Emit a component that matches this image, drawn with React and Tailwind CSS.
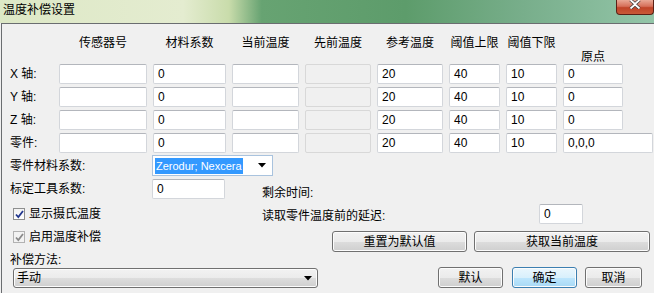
import React from "react";

const headers = ["传感器号", "材料系数", "当前温度", "先前温度", "参考温度", "阈值上限", "阈值下限"];

const rows = [
  { label: "X 轴:", origin: "0" },
  { label: "Y 轴:", origin: "0" },
  { label: "Z 轴:", origin: "0" },
  { label: "零件:", origin: "0,0,0", wide: true },
];

const Box = ({ value, disabled, className = "" }) => (
  <div
    className={`h-[20px] border rounded-[2px] pl-[4px] flex items-center leading-none ${
      disabled ? "bg-[#f0f0f0] border-[#d8d8d8]" : "bg-white border-[#d3d6db] border-t-[#b3b6bc]"
    } ${className}`}
  >
    {value}
  </div>
);

const Arrow = () => (
  <svg width="8" height="5" viewBox="0 0 8 5" className="shrink-0">
    <path d="M0 0H8L4 4.5Z" fill="#000" />
  </svg>
);

const Check = ({ disabled }) => (
  <div
    className={`w-[12px] h-[12px] border flex items-center justify-center ${
      disabled ? "border-[#b2b2b2] bg-[#f2f2f2]" : "border-[#8e8f8f] bg-[linear-gradient(to_bottom,#f2f2f2,#ffffff)]"
    }`}
  >
    <svg width="9" height="9" viewBox="0 0 9 9">
      <path d="M1 4.5L3.3 7L8 1" fill="none" stroke={disabled ? "#8a8a8a" : "#22378e"} strokeWidth="1.8" />
    </svg>
  </div>
);

const Button = ({ children, primary, className = "" }) => (
  <div
    className={`h-[21px] border rounded-[3px] flex items-center justify-center leading-none shadow-[inset_0_0_0_1px_#fcfcfc] ${
      primary
        ? "border-[#3c7fb1] bg-[linear-gradient(to_bottom,#eaf6fd_0%,#d9f0fc_50%,#bee6fd_51%,#a7d9f5_100%)]"
        : "border-[#707070] bg-[linear-gradient(to_bottom,#f2f2f2_0%,#ebebeb_50%,#dddddd_51%,#cfcfcf_100%)]"
    } ${className}`}
  >
    {children}
  </div>
);

export default function App() {
  return (
    <div className="w-[654px] h-[293px] overflow-hidden bg-[#f0f0f0] text-[12px] text-black font-['Liberation_Sans','Noto_Sans_CJK_SC',sans-serif]">
      {/* title bar */}
      <div className="h-[23px] flex items-start bg-[linear-gradient(to_right,#dde8c6_0%,#e4ecd0_28%,#c9dcab_35%,#67a372_40%,#5d9c6b_62%,#78ae8b_80%,#93c5a8_100%)]">
        <div className="pl-[3px] pt-[3px] leading-[14px] flex-1">温度补偿设置</div>
        <div className="w-[38px] h-[15px] border border-t-0 border-[#5b2016] rounded-b-[4px] bg-[linear-gradient(to_bottom,#e9a895_0%,#d6705a_45%,#c04428_55%,#c95a38_100%)] flex justify-center">
          <svg width="12" height="9" viewBox="0 0 12 9">
            <path d="M1.5 0L6 4L10.5 0M1.5 8.5L6 4.5L10.5 8.5" fill="none" stroke="#3b3b3b" strokeWidth="3.2" />
            <path d="M1.5 0L6 4L10.5 0M1.5 8.5L6 4.5L10.5 8.5" fill="none" stroke="#ffffff" strokeWidth="1.8" />
          </svg>
        </div>
      </div>

      <div className="ml-px h-[270px] border-l border-t border-[#6a6d70] pl-[8px] pt-[12px]">
        {/* sensor table */}
        <div className="grid grid-cols-[43px_88px_73px_67px_66px_66px_51px_51px_90px] gap-x-[6px] gap-y-[3px]">
          <div className="h-[25px]" />
          {headers.map((h) => (
            <div key={h} className="h-[25px] leading-[14px] text-center whitespace-nowrap -mx-[3px]">
              {h}
            </div>
          ))}
          <div className="h-[25px] flex items-end">
            <div className="w-[60px] text-center leading-[14px] -mb-[3px]">原点</div>
          </div>

          {rows.map((r) => (
            <React.Fragment key={r.label}>
              <div className="h-[20px] flex items-center">{r.label}</div>
              <Box value="" />
              <Box value="0" />
              <Box value="" />
              <Box value="" disabled />
              <Box value="20" />
              <Box value="40" />
              <Box value="10" />
              <Box value={r.origin} className={r.wide ? "w-[90px]" : "w-[60px]"} />
            </React.Fragment>
          ))}
        </div>

        {/* material */}
        <div className="mt-[2px] h-[21px] flex items-center">
          <div className="w-[142px]">零件材料系数:</div>
          <div className="w-[121px] h-[21px] border border-[#a9c3de] bg-white flex items-center pl-[2px] pr-[6px]">
            <span className="bg-[#3399ff] text-white text-[11px] leading-[16px] px-px whitespace-nowrap">Zerodur; Nexcera</span>
            <div className="flex-1" />
            <Arrow />
          </div>
        </div>

        {/* tool coefficient */}
        <div className="mt-[3px] h-[20px] flex">
          <div className="w-[142px] self-center">标定工具系数:</div>
          <Box value="0" className="w-[73px]" />
          <div className="ml-[37px] self-end leading-[14px] -mb-[1px]">剩余时间:</div>
        </div>

        {/* show celsius + delay */}
        <div className="mt-[5px] h-[20px] flex items-center">
          <div className="w-[252px] pl-[3px] flex items-center gap-[4px]">
            <Check />
            <span>显示摄氏温度</span>
          </div>
          <div className="w-[277px] mt-[3px]">读取零件温度前的延迟:</div>
          <Box value="0" className="w-[44px] h-[19px]" />
        </div>

        {/* enable + buttons */}
        <div className="mt-[7px] h-[21px] flex">
          <div className="w-[322px] pl-[3px] flex items-center gap-[4px] self-start h-[14px] mt-[-1px]">
            <Check disabled />
            <span>启用温度补偿</span>
          </div>
          <Button className="w-[135px]">重置为默认值</Button>
          <Button className="w-[176px] ml-[7px]">获取当前温度</Button>
        </div>

        <div className="mt-[1px] h-[14px] leading-[14px]">补偿方法:</div>

        {/* method + dialog buttons */}
        <div className="h-[21px] flex items-center">
          <div className="ml-[3px] w-[305px] h-[20px] mt-[1px] border border-[#707070] rounded-[3px] bg-[linear-gradient(to_bottom,#f2f2f2_0%,#ebebeb_50%,#dddddd_51%,#cfcfcf_100%)] shadow-[inset_0_0_0_1px_#fcfcfc] flex items-center pl-[3px] pr-[5px]">
            <span className="flex-1">手动</span>
            <Arrow />
          </div>
          <Button className="w-[65px] ml-[120px]">默认</Button>
          <Button primary className="w-[65px] ml-[9px]">确定</Button>
          <Button className="w-[57px] ml-[8px]">取消</Button>
        </div>
      </div>
    </div>
  );
}
